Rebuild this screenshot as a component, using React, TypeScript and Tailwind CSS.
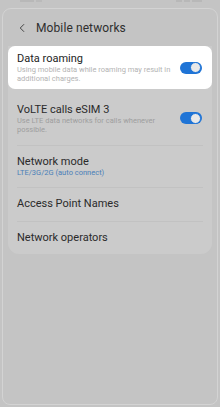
import { ChevronLeft } from "lucide-react";

function Toggle() {
	return (
		<div className="w-[22px] h-[12px] rounded-full bg-[#1f74d6] flex items-center justify-end pr-[1px] shrink-0">
			<div className="w-[11px] h-[11px] rounded-full bg-[#e9e9e9] border-[1.5px] border-[#1f74d6]" />
		</div>
	);
}

function Divider() {
	return <div className="mx-[9px] h-px bg-[#c2c2c2]" />;
}

export default function App() {
	return (
		<div
			className="w-[220px] h-[407px] bg-[#c4c4c4] overflow-hidden relative"
			style={{ fontFamily: "Roboto, 'Noto Sans', sans-serif" }}
		>
			{/* faint status bar remnants */}
			<div className="absolute top-0 left-[20px] flex gap-[2px]">
				<div className="w-[14px] h-[2px] bg-[#b8b8b8]" />
				<div className="w-[6px] h-[2px] bg-[#bababa]" />
			</div>
			<div className="absolute top-0 right-[18px] flex gap-[2px]">
				<div className="w-[6px] h-[2px] bg-[#b8b8b8]" />
				<div className="w-[6px] h-[2px] bg-[#b8b8b8]" />
				<div className="w-[10px] h-[2px] bg-[#b8b8b8]" />
			</div>
			<div className="mt-[8px] mx-[2px] h-[397px] rounded-t-[9px] rounded-b-[8px] border border-[#d3d3d3] bg-[#c4c4c4] flex flex-col">
				<div className="h-[37px] flex items-center pl-[12px] gap-[7px]">
					<ChevronLeft size={14} strokeWidth={1.6} className="text-[#3a3a3a]" />
					<span className="text-[12px] text-[#2f2f2f] tracking-[0.1px]">Mobile networks</span>
				</div>
				<div className="mx-[5px] rounded-b-[11px] bg-[#cbcbcb] flex flex-col">
					<div className="bg-white rounded-[7px] h-[43px] flex items-center pl-[9px] pr-[10px]">
						<div className="flex-1 flex flex-col">
							<span className="text-[11px] leading-[13px] text-[#232323]">Data roaming</span>
							<span className="text-[7.5px] leading-[9px] text-[#b3b3b3] pr-[6px]">
								Using mobile data while roaming may result in additional charges.
							</span>
						</div>
						<Toggle />
					</div>
					<div className="h-[56px] flex items-center pl-[9px] pr-[10px] pt-[2px]">
						<div className="flex-1 flex flex-col">
							<span className="text-[11px] leading-[13px] text-[#2a2a2a]">VoLTE calls eSIM 3</span>
							<span className="text-[7.5px] leading-[9px] text-[#9e9e9e] pr-[12px]">
								Use LTE data networks for calls whenever possible.
							</span>
						</div>
						<Toggle />
					</div>
					<Divider />
					<div className="h-[41px] flex flex-col justify-center pl-[9px]">
						<span className="text-[11px] leading-[13px] text-[#2a2a2a]">Network mode</span>
						<span className="text-[7.5px] leading-[10px] text-[#4a7fb8]">LTE/3G/2G (auto connect)</span>
					</div>
					<Divider />
					<div className="h-[33px] flex items-center pl-[9px]">
						<span className="text-[11px] text-[#2a2a2a]">Access Point Names</span>
					</div>
					<Divider />
					<div className="h-[32px] flex items-center pl-[9px]">
						<span className="text-[11px] text-[#2a2a2a]">Network operators</span>
					</div>
				</div>
			</div>
		</div>
	);
}
